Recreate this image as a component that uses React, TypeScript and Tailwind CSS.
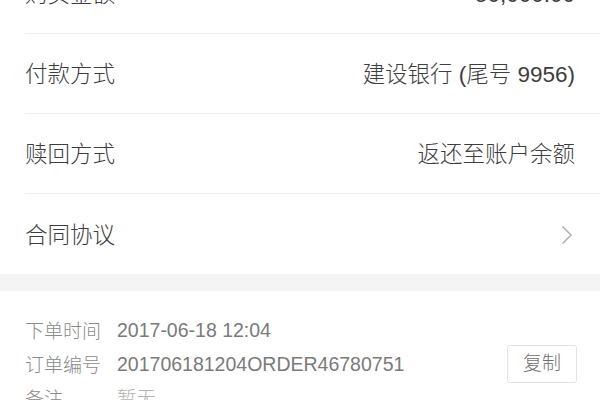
import React from "react";

const font = { fontFamily: '"Liberation Sans", "Noto Sans CJK SC", sans-serif' };

function Row({ label, value, chevron, last }: { label: string; value?: string; chevron?: boolean; last?: boolean }) {
  return (
    <div className="pl-[25px]">
      <div className={`flex h-[80px] items-center justify-between pr-[25px] pt-[4px] ${last ? "" : "border-b border-[#ededed]"}`}>
        <span className="text-[22.5px] font-light text-[#3d3d3d] leading-none">{label}</span>
        {value && <span className="text-[22.5px] font-light text-[#3d3d3d] leading-none">{value}</span>}
        {chevron && (
          <svg width="12" height="20" viewBox="0 0 12 20" className="mr-[2px] -mt-[3px]">
            <path d="M1.5 1.5 L10 10 L1.5 18.5" fill="none" stroke="#b0b0b0" strokeWidth="1.5" />
          </svg>
        )}
      </div>
    </div>
  );
}

function Info({ label, value, light, children }: { label: string; value: string; light?: boolean; children?: React.ReactNode }) {
  return (
    <div className="flex h-[34px] items-center pt-[2px]">
      <span className="w-[92px] text-[19px] font-light text-[#8a8a8a] leading-none">{label}</span>
      <span className={`flex-1 text-[19.5px] font-light leading-none ${light ? "text-[#b5b5b5]" : "text-[#7a7a7a]"}`}>{value}</span>
      {children}
    </div>
  );
}

export default function App() {
  return (
    <div className="w-[600px] h-[400px] overflow-hidden bg-white" style={font}>
      <div className="-mt-[46px]">
        <Row label="购买金额" value="50,000.00" />
        <Row label="付款方式" value="建设银行 (尾号 9956)" />
        <Row label="赎回方式" value="返还至账户余额" />
        <Row label="合同协议" chevron last />
      </div>
      <div className="h-[17px] bg-[#f4f4f4]" />
      <div className="pl-[25px] pr-[23px] pt-[22px]">
        <Info label="下单时间" value="2017-06-18 12:04" />
        <Info label="订单编号" value="201706181204ORDER46780751">
          <div className="-mt-[2px] flex h-[38px] w-[70px] items-center justify-center rounded-[3px] border border-[#e3e3e3] text-[19px] font-light text-[#6e6e6e]">
            复制
          </div>
        </Info>
        <Info label="备注" value="暂无" light />
      </div>
    </div>
  );
}
